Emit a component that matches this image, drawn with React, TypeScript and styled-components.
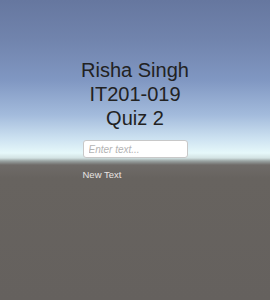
import React from 'react';
import styled, { createGlobalStyle } from 'styled-components';

const GlobalStyle = createGlobalStyle`
  html, body {
    margin: 0;
    padding: 0;
    width: 270px;
    height: 300px;
    overflow: hidden;
  }
  body {
    font-family: 'Liberation Sans', Arial, sans-serif;
  }
`;

// sky fades to a pale horizon, then the flat grey ground plane
const Scene = styled.div`
  width: 270px;
  height: 300px;
  box-sizing: border-box;
  padding-top: 58px;
  display: flex;
  flex-direction: column;
  align-items: center;
  background: linear-gradient(
    to bottom,
    #66779f 0px,
    #7184ad 40px,
    #8097c2 80px,
    #a3bbdc 115px,
    #cfe4f2 140px,
    #e6f8fa 153px,
    #d2e2e2 158px,
    #9aa3a2 161px,
    #6f6b68 165px,
    #67635f 178px,
    #65615e 300px
  );
`;

const Title = styled.div`
  font-size: 20px;
  line-height: 24px;
  color: #222222;
  text-align: center;
`;

const Column = styled.div`
  width: 105px;
  margin-top: 10px;
  display: flex;
  flex-direction: column;
`;

const Field = styled.input`
  box-sizing: border-box;
  width: 105px;
  height: 18px;
  margin: 0;
  padding: 0 5px;
  border: 1px solid #c8c8c8;
  border-radius: 3px;
  background: #ffffff;
  font-family: 'Liberation Sans', Arial, sans-serif;
  font-size: 10px;
  color: #333;
  outline: none;

  &::placeholder {
    color: #b4b4b4;
    font-style: italic;
  }
`;

const Label = styled.div`
  margin-top: 11px;
  font-size: 9.5px;
  line-height: 12px;
  color: #e8e4e2;
`;

export default function App() {
  return (
    <>
      <GlobalStyle />
      <Scene>
        <Title>
          Risha Singh
          <br />
          IT201-019
          <br />
          Quiz 2
        </Title>
        <Column>
          <Field placeholder="Enter text..." />
          <Label>New Text</Label>
        </Column>
      </Scene>
    </>
  );
}
